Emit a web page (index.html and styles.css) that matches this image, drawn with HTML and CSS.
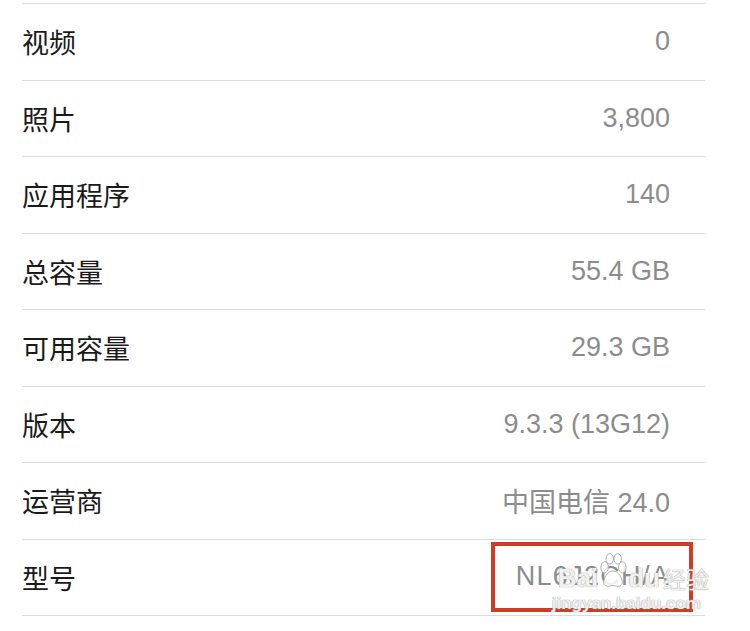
FILE: index.html
```html
<!DOCTYPE html>
<html lang="zh-CN">
<head>
    <meta charset="UTF-8">
    <title>关于本机</title>
    <link rel="stylesheet" href="styles.css">
</head>
<body>
    <div class="about-list">
        <div class="row"><span class="label">视频</span><span class="value">0</span></div>
        <div class="row"><span class="label">照片</span><span class="value">3,800</span></div>
        <div class="row"><span class="label">应用程序</span><span class="value">140</span></div>
        <div class="row"><span class="label">总容量</span><span class="value">55.4 GB</span></div>
        <div class="row"><span class="label">可用容量</span><span class="value">29.3 GB</span></div>
        <div class="row"><span class="label">版本</span><span class="value">9.3.3 (13G12)</span></div>
        <div class="row"><span class="label">运营商</span><span class="value">中国电信 24.0</span></div>
        <div class="row"><span class="label">型号</span><span class="value marked">NL6J2CH/A</span></div>

        <div class="watermark">
            <div class="wm-top">
                <span class="wm-text">Bai</span>
                <svg class="paw" width="28" height="38" viewBox="0 0 30 38">
                    <ellipse cx="6" cy="15" rx="4" ry="6"/>
                    <ellipse cx="11.5" cy="6" rx="4" ry="5.5"/>
                    <ellipse cx="20" cy="6" rx="4" ry="5.5"/>
                    <ellipse cx="25" cy="15" rx="4" ry="6"/>
                    <path d="M15 19 C9 19 5 27 5 31 C5 35 9 36 12 35 C14 34.5 16 34.5 18 35 C21 36 25 35 25 31 C25 27 21 19 15 19 Z"/>
                </svg>
                <span class="wm-text">du</span>
                <span class="wm-text wm-cn">经验</span>
            </div>
            <div class="wm-url">jingyan.baidu.com</div>
        </div>
    </div>
</body>
</html>
```

FILE: styles.css
```css
body {
    margin: 0;
    background-color: #ffffff;
    font-family: "Noto Sans CJK SC", sans-serif;
}
.about-list {
    position: relative;
    margin: 3px 45px 0 22px;
    border-top: 1px solid #dcdcdc;
}
.row {
    display: flex;
    align-items: center;
    justify-content: space-between;
    height: 75.5px;
    padding-right: 35px;
    border-bottom: 1px solid #dcdcdc;
}
.label {
    font-size: 27px;
    color: #1a1a1a;
}
.value {
    font-family: "Liberation Sans", "Noto Sans CJK SC", sans-serif;
    font-size: 27px;
    color: #8c8c8c;
}
.value.marked {
    display: inline-block;
    margin-right: -23px;
    padding: 15px 19px 16px 21px;
    border: 4px solid #cf3b26;
    letter-spacing: 1.3px;
}
.watermark {
    position: absolute;
    right: -4px;
    bottom: 2px;
    text-align: right;
    color: rgba(255, 255, 255, 0.85);
    text-shadow: 0 0 1px #a0a0a0, 0 0 1px #a0a0a0;
    pointer-events: none;
}
.wm-top {
    display: flex;
    align-items: flex-end;
    justify-content: flex-end;
    gap: 1px;
}
.wm-text {
    font-family: "Liberation Sans", sans-serif;
    font-weight: bold;
    font-size: 26px;
    line-height: 28px;
}
.wm-cn {
    font-family: "Noto Sans CJK SC", sans-serif;
    font-weight: normal;
    font-size: 23px;
    margin-left: 2px;
}
.paw {
    fill: rgba(255, 255, 255, 0.85);
    stroke: #a8a8a8;
    stroke-width: 1;
    margin-bottom: 2px;
}
.wm-url {
    font-family: "Liberation Sans", sans-serif;
    font-size: 17px;
    font-weight: bold;
    line-height: 20px;
    margin-top: 2px;
    margin-right: 8px;
}
```
